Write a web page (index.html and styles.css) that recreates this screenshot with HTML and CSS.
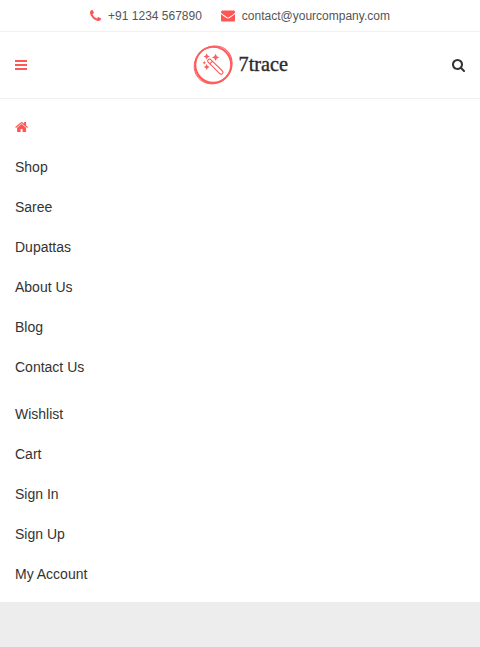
FILE: index.html
```html
<!DOCTYPE html>
<html lang="en">
<head>
<meta charset="utf-8">
<title>7trace</title>
<link rel="stylesheet" href="styles.css">
</head>
<body>
<div class="topbar">
  <a class="contact"><svg class="icon phone" viewBox="0 0 1408 1408"><path transform="matrix(1 0 0 -1 0 1408)" d="M1408 296q0 -27 -10 -70.5t-21 -68.5q-21 -50 -122 -106q-94 -51 -186 -51q-27 0 -53 3.5t-57.5 12.5t-47 14.5t-55.5 20.5t-49 18q-98 35 -175 83q-127 79 -264 216t-216 264q-48 77 -83 175q-3 9 -18 49t-20.5 55.5t-14.5 47t-12.5 57.5t-3.5 53q0 92 51 186q56 101 106 122q25 11 68.5 21t70.5 10q14 0 21 -3q18 -6 53 -76q11 -19 30 -54t35 -63.5t31 -53.5q3 -4 17.5 -25t21.5 -35.5t7 -28.5q0 -20 -28.5 -50t-62 -55t-62 -53t-28.5 -46q0 -9 5 -22.5t8.5 -20.5t14 -24t11.5 -19q76 -137 174 -235t235 -174q2 -1 19 -11.5t24 -14t20.5 -8.5t22.5 -5q18 0 46 28.5t53 62t55 62t50 28.5q14 0 28.5 -7t35.5 -21.5t25 -17.5q25 -15 53.5 -31t63.5 -35t54 -30q70 -35 76 -53q3 -7 3 -21z"/></svg><span>+91 1234 567890</span></a>
  <a class="contact"><svg class="icon envelope" viewBox="0 0 1792 1408"><path transform="matrix(1 0 0 -1 0 1280)" d="M1792 826v-794q0 -66 -47 -113t-113 -47h-1472q-66 0 -113 47t-47 113v794q44 -49 101 -87q362 -246 497 -345q57 -42 92.5 -65.5t94.5 -48t110 -24.5h1h1q51 0 110 24.5t94.5 48t92.5 65.5q170 123 498 345q57 39 100 87zM1792 1120q0 -79 -49 -151t-122 -123q-376 -261 -468 -325q-10 -7 -42.5 -30.5t-54 -38t-52 -32.5t-57.5 -27t-50 -9h-1h-1q-23 0 -50 9t-57.5 27t-52 32.5t-54 38t-42.5 30.5q-91 64 -262 182.5t-205 142.5q-62 42 -117 115.5t-55 136.5q0 78 41.5 130t118.5 52h1472q65 0 112.5 -47t47.5 -113z"/></svg><span>contact@yourcompany.com</span></a>
</div>
<header class="header">
  <svg class="icon bars" viewBox="0 0 12 10"><path d="M0 0h12v2H0zM0 4h12v2H0zM0 8h12v2H0z"/></svg>
  <a class="brand">
    <svg class="logo" viewBox="0 0 98 40">
      <g fill="none" stroke="#ff5c5c">
        <circle cx="20.2" cy="19.8" r="17.9" stroke-width="1.9"/>
        <ellipse cx="20.7" cy="19.6" rx="19.2" ry="17.8" stroke-width="1" transform="rotate(-48 20.7 19.6)"/>
        <ellipse cx="19.9" cy="20.4" rx="19.2" ry="18" stroke-width=".9" transform="rotate(-40 19.9 20.4)"/>
        <path d="M15.2 17.2a1.7 1.7 0 0 1 2.6-2.5L29.4 26a1.8 1.8 0 0 1-2.6 2.6zM16.6 19l3-2.9" stroke-width="1.1"/>
      </g>
      <path class="spark" d="M13.7 8.2l1 2.2 2.2 1-2.2 1-1 2.2-1-2.2-2.2-1 2.2-1zM22.6 8.7l1.2 2.5 2.5 1.2-2.5 1.2-1.2 2.5-1.2-2.5-2.5-1.2 2.5-1.2zM13.7 18.9l1 2 2 1-2 1-1 2-1-2-2-1 2-1zM11.3 16l.6 1.2 1.2.6-1.2.6-.6 1.2-.6-1.2-1.2-.6 1.2-.6z"/>
      <text class="wordmark" x="45.5" y="26" textLength="49.5" lengthAdjust="spacingAndGlyphs">7trace</text>
    </svg>
  </a>
  <svg class="icon search" viewBox="0 0 1664 1664"><path transform="matrix(1 0 0 -1 0 1408)" d="M1152 704q0 185 -131.5 316.5t-316.5 131.5t-316.5 -131.5t-131.5 -316.5t131.5 -316.5t316.5 -131.5t316.5 131.5t131.5 316.5zM1664 -128q0 -52 -38 -90t-90 -38q-54 0 -90 38l-343 342q-179 -124 -399 -124q-143 0 -273.5 55.5t-225 150t-150 225t-55.5 273.5t55.5 273.5t150 225t225 150t273.5 55.5t273.5 -55.5t225 -150t150 -225t55.5 -273.5q0 -220 -124 -399l343 -343q37 -37 37 -90z"/></svg>
</header>
<nav class="menu">
  <ul class="list">
    <li><svg class="icon home" viewBox="0 0 1664 1283"><path transform="matrix(1 0 0 -1 12 1283)" d="M1408 544v-480q0 -26 -19 -45t-45 -19h-384v384h-256v-384h-384q-26 0 -45 19t-19 45v480q0 1 .5 3t.5 3l575 474l575 -474q1 -2 1 -6zM1631 613l-62 -74q-8 -9 -21 -11h-3q-13 0 -21 7l-692 577l-692 -577q-12 -8 -24 -7q-13 2 -21 11l-62 74q-8 10 -7 23.5t11 21.5l719 599q32 26 76 26t76 -26l244 -204v195q0 14 9 23t23 9h192q14 0 23 -9t9 -23v-408l219 -182q10 -8 11 -21.5t-7 -23.5z"/></svg></li>
    <li>Shop</li><li>Saree</li><li>Dupattas</li><li>About Us</li><li>Blog</li><li>Contact Us</li>
  </ul>
  <ul class="list account">
    <li>Wishlist</li><li>Cart</li><li>Sign In</li><li>Sign Up</li><li>My Account</li>
  </ul>
</nav>
</body>
</html>
```
FILE: styles.css
```css
* { box-sizing: border-box; }
html { background: #ededed; }
body {
  margin: 0;
  font-family: "Liberation Sans", Arial, sans-serif;
  font-size: 14px;
  color: #333;
}
.icon { display: block; flex: none; fill: #ff5555; }
.topbar {
  display: flex;
  justify-content: center;
  gap: 19px;
  height: 32px;
  background: #fff;
  border-bottom: 1px solid #f1f1f1;
  font-size: 12px;
  color: #555;
}
.contact { display: flex; align-items: center; gap: 7px; }
.phone { width: 11px; height: 11px; margin-bottom: 1px; }
.envelope { width: 14px; height: 12px; }
.header {
  display: flex;
  align-items: center;
  justify-content: space-between;
  height: 67px;
  padding: 0 15px;
  background: #fff;
  border-bottom: 1px solid #f1f1f1;
}
.bars { width: 12px; height: 10px; }
.search { width: 13px; height: 13px; fill: #333; }
.brand { padding-left: 4px; }
.logo { display: block; width: 98px; height: 40px; overflow: visible; }
.spark { fill: #ff5c5c; }
.wordmark {
  font-family: "Liberation Serif", serif;
  font-size: 21px;
  fill: #2b2b2f;
  stroke: #2b2b2f;
  stroke-width: .4px;
}
.menu { height: 503px; padding-top: 8px; background: #fff; }
.list { margin: 0; padding: 0 15px; list-style: none; }
.list li { display: flex; align-items: center; height: 40px; }
.account { margin-top: 7px; }
.home { width: 13px; height: 10px; }
```
